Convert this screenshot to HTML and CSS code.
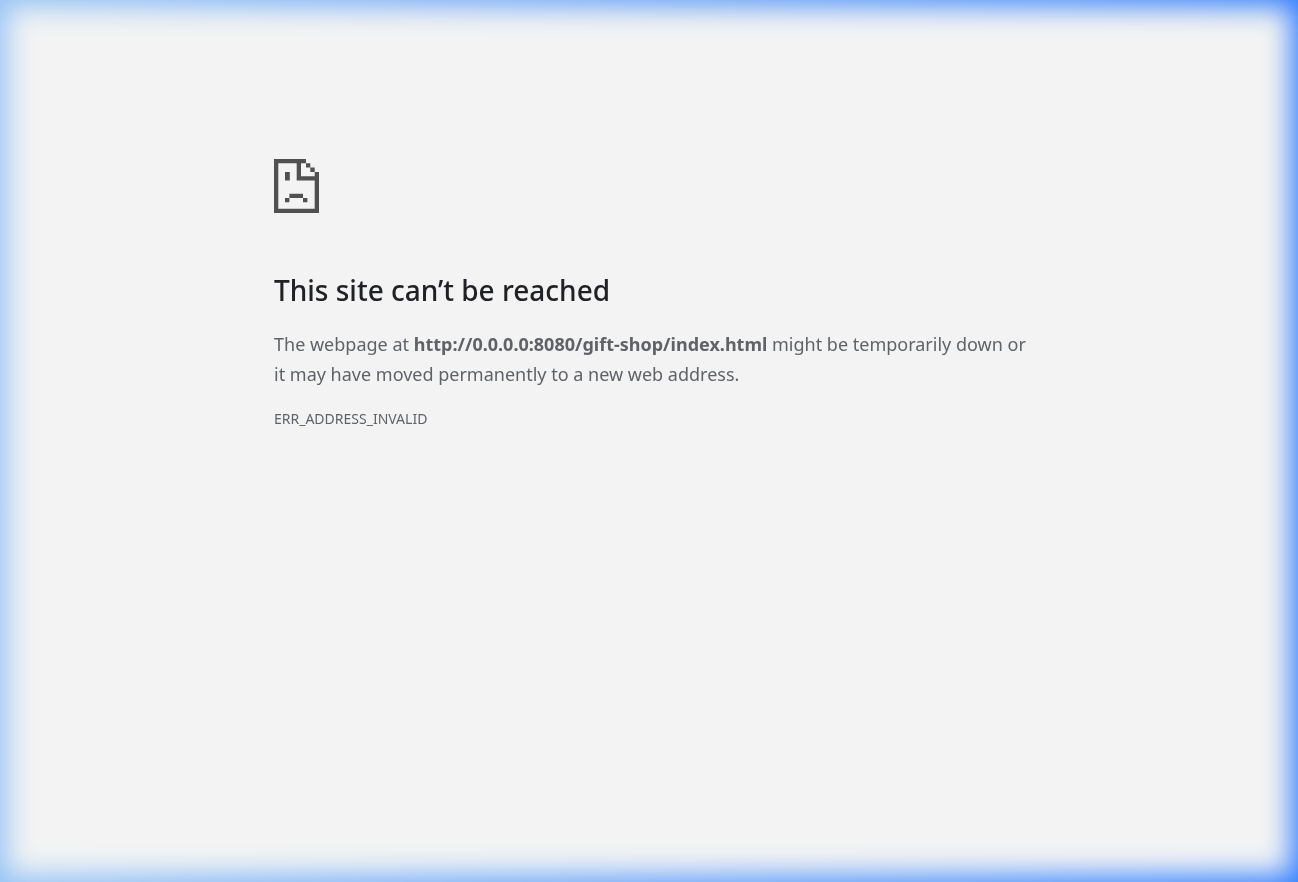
FILE: index.html
```html
<!DOCTYPE html>
<html lang="en">
<head>
<meta charset="utf-8">
<meta name="viewport" content="width=device-width, initial-scale=1">
<title>This site can’t be reached</title>
<link rel="stylesheet" href="styles.css">
</head>
<body class="page">
<main class="error">
  <svg class="error-icon" viewBox="0 0 45 54" shape-rendering="geometricPrecision" aria-hidden="true">
    <path fill="#505050" d="M0 0H32V4.3H27V17.2H40.7V13H45V54H0ZM4.3 4.3V49.7H40.7V21.5H22.7V4.3ZM32 4.3H36.3V8.6H32ZM36.3 8.6H40.7V13H36.3ZM11 13H15.8V21.5H11ZM15.4 34.7H29V39H15.4ZM11 39H15.4V43.3H11ZM29 39H33.4V43.3H29Z" fill-rule="evenodd"/>
  </svg>
  <h1 class="error-title">This site can’t be reached</h1>
  <p class="error-text">The webpage at <strong>http://0.0.0.0:8080/gift-shop/index.html</strong> might be temporarily down or it may have moved permanently to a new web address.</p>
  <p class="error-code">ERR_ADDRESS_INVALID</p>
</main>
</body>
</html>
```
FILE: styles.css
```css
.page {
  margin: 0;
  min-height: 100vh;
  overflow-x: hidden;
  background: linear-gradient(to right, #96c4f6, #3480ff) fixed;
  color: #5f6368;
  font-family: "Segoe UI", "Noto Sans", sans-serif;
}

/* Soft-edged sheet that leaves a blue glow around the window */
.page::before {
  content: "";
  position: fixed;
  inset: 7px;
  z-index: -1;
  background: #f3f3f3;
  filter: blur(14px);
}

.error {
  box-sizing: border-box;
  max-width: 756px;
  margin: 0 auto;
  padding: 159px 0 0 3px;
}

.error-icon {
  display: block;
  width: 45px;
  height: 54px;
}

.error-title {
  margin: 59px 0 0;
  color: #202124;
  font-size: 28px;
  font-weight: 500;
  line-height: 36px;
}

.error-text {
  margin: 21px 0 0;
  font-size: 18px;
  line-height: 30px;
}

.error-code {
  margin: 20px 0 0;
  font-size: 14px;
  line-height: 20px;
}
```
